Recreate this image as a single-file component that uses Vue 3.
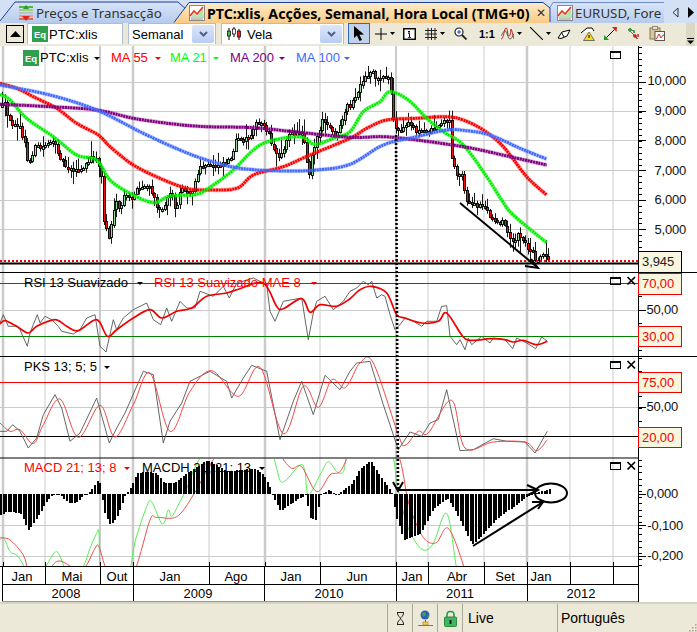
<script setup>
const rnd = (() => { let s = 12345; return () => (s = (s * 16807) % 2147483647) / 2147483647 })()
const tr = (a, ox, oy) => a.map(([x, y]) => [ox + x / 3, oy + y / 3])
const polyl = p => p.map(q => q[0].toFixed(1) + ',' + q[1].toFixed(1)).join(' ')
const smooth = p => {
  let d = `M${p[0][0].toFixed(1)} ${p[0][1].toFixed(1)}`
  for (let i = 0; i < p.length - 1; i++) {
    const a = p[Math.max(i - 1, 0)], b = p[i], c = p[i + 1], e = p[Math.min(i + 2, p.length - 1)]
    d += `C${(b[0] + (c[0] - a[0]) / 6).toFixed(1)} ${(b[1] + (c[1] - a[1]) / 6).toFixed(1)} ${(c[0] - (e[0] - b[0]) / 6).toFixed(1)} ${(c[1] - (e[1] - b[1]) / 6).toFixed(1)} ${c[0].toFixed(1)} ${c[1].toFixed(1)}`
  }
  return d
}
const interp = (p, x) => {
  if (x <= p[0][0]) return p[0][1]
  for (let i = 0; i < p.length - 1; i++) {
    if (x <= p[i + 1][0]) {
      const w = p[i + 1][0] - p[i][0]
      return w <= 0 ? p[i + 1][1] : p[i][1] + (p[i + 1][1] - p[i][1]) * (x - p[i][0]) / w
    }
  }
  return p[p.length - 1][1]
}
const join = (a, b, o1, o2, oy) => [...tr(a, o1, oy), ...tr(b, o2, oy)]

const price = join(
  [[3,140],[10,130],[20,175],[30,190],[42,185],[55,200],[72,250],[82,320],[92,285],[105,255],[115,265],[130,255],[145,240],[165,260],[180,295],[195,320],[215,325],[232,335],[245,325],[260,310],[275,285],[290,305],[300,340],[303,470],[315,500],[325,540],[332,480],[345,430],[355,450],[370,405],[390,415],[405,390],[435,375],[450,390],[465,430],[485,450],[500,400],[515,400],[520,450],[535,410],[540,380],[575,395],[585,350],[600,320],[630,315],[640,320],[660,310],[680,300],[695,280],[705,240],[725,240],[745,230],[760,195],[785,190],[800,215],[820,270],[830,295],[850,260],[860,225],[905,215],[915,265],[922,370],[930,290],[945,240],[965,180],[985,205],[1000,225],[1010,220],[1025,180],[1040,135]],
  [[0,135],[10,115],[30,75],[45,50],[65,30],[78,60],[95,50],[115,50],[120,100],[123,165],[135,210],[150,210],[175,185],[195,210],[220,215],[235,210],[270,190],[295,175],[295,270],[305,310],[320,345],[335,345],[342,400],[350,430],[375,435],[400,435],[415,470],[430,480],[460,490],[470,520],[490,545],[500,525],[520,550],[545,575],[555,600],[565,595],[575,575],[590,590],[596,600]],
  0, 350, 60)
const candles = []
for (let x = 1, prev = interp(price, 0); x < 549; x += 2.54) {
  const c = interp(price, x), n = (rnd() - 0.5) * 5
  const open = prev, close = c + n
  const top = Math.min(open, close), bot = Math.max(open, close)
  candles.push({
    x: Math.round(x) + 0.5,
    y: Math.round(top) + 0.5,
    h: Math.max(2, Math.round(bot - top)),
    up: close < open,
    t: top - 1 - rnd() * rnd() * 15,
    b: Math.min(bot + 1 + rnd() * rnd() * 15, 262)
  })
  prev = close
}
const ma55 = smooth(join(
  [[0,70],[50,85],[100,110],[170,145],[230,190],[295,225],[330,260],[400,315],[480,355],[560,385],[620,390],[710,385],[760,345],[850,320],[930,285],[1050,235]],
  [[50,205],[110,180],[200,175],[290,170],[340,180],[400,210],[460,260],[530,350],[590,405]], 0, 350, 60))
const ma21 = smooth(join(
  [[0,103],[30,120],[80,175],[160,230],[230,285],[290,300],[330,360],[390,400],[460,428],[510,408],[590,403],[640,375],[700,330],[760,270],[810,243],[900,230],[945,253],[1000,235],[1050,215]],
  [[40,155],[90,125],[120,95],[175,120],[230,175],[280,215],[340,255],[410,350],[455,420],[490,465],[590,548]], 0, 350, 60))
const ma200 = smooth(join(
  [[0,133],[150,140],[290,150],[400,175],[520,192],[620,200],[760,203],[880,215],[1050,232]],
  [[100,230],[200,240],[350,262],[480,290],[590,315]], 0, 350, 60))
const ma100 = smooth(join(
  [[0,75],[150,105],[290,150],[430,220],[540,270],[620,300],[720,325],[850,333],[950,330],[1050,313]],
  [[100,255],[200,230],[290,210],[350,212],[420,225],[510,265],[590,297]], 0, 350, 60))
const maLines = [[ma55, '#ff0000'], [ma21, '#00f000'], [ma200, '#800080'], [ma100, '#4169ff']]

const rsiGrey = polyl(join(
  [[0,165],[10,140],[25,175],[50,175],[60,185],[82,235],[90,195],[100,170],[112,140],[120,165],[135,145],[155,155],[175,175],[185,190],[220,198],[240,185],[260,150],[285,140],[300,235],[318,252],[340,155],[350,185],[370,150],[400,125],[440,105],[460,155],[482,170],[500,120],[515,160],[540,100],[560,120],[585,120],[600,70],[640,85],[670,55],[688,90],[710,45],[760,30],[800,50],[810,130],[825,160],[850,100],[905,90],[925,215],[940,135],[950,100],[975,85],[1000,125],[1030,100],[1050,70]],
  [[20,60],[40,40],[55,50],[65,40],[80,90],[95,80],[105,85],[120,140],[135,185],[150,170],[165,150],[190,160],[215,175],[230,160],[260,160],[275,115],[290,113],[300,205],[320,230],[330,215],[345,245],[355,210],[365,230],[395,205],[420,225],[430,210],[465,215],[488,242],[500,210],[530,225],[557,242],[575,207],[592,220]], 0, 350, 268))
const rsiRed = smooth(join(
  [[0,168],[15,158],[50,175],[85,195],[110,175],[165,155],[200,175],[235,188],[290,155],[322,205],[350,185],[400,150],[450,125],[485,150],[530,130],[575,120],[620,85],[680,75],[720,62],[790,45],[830,115],[850,122],[905,92],[930,133],[960,110],[1010,115],[1050,92]],
  [[30,65],[65,55],[110,75],[140,140],[165,150],[215,165],[265,160],[290,135],[340,207],[370,217],[420,212],[465,215],[490,222],[520,217],[560,230],[592,220]], 0, 350, 268))
const pksGrey = polyl(join(
  [[0,490],[20,490],[38,470],[60,490],[85,540],[110,510],[130,440],[165,380],[185,420],[210,520],[240,495],[290,390],[328,525],[350,480],[375,435],[430,310],[460,320],[490,525],[510,460],[545,405],[570,340],[630,310],[680,340],[695,390],[730,330],[755,292],[800,310],[840,515],[880,400],[905,340],[940,440],[975,322],[1020,365],[1050,310]],
  [[20,285],[60,280],[100,410],[145,545],[180,492],[215,505],[240,465],[265,455],[290,365],[330,548],[370,545],[430,512],[470,520],[525,522],[555,555],[592,490]], 0, 350, 268))
const pksRed = smooth(join(
  [[0,465],[30,490],[60,485],[100,527],[130,470],[180,393],[235,508],[300,412],[345,507],[400,410],[450,315],[510,490],[570,370],[635,308],[715,385],[780,298],[850,497],[910,355],[955,418],[995,335],[1030,360],[1050,340]],
  [[30,285],[70,285],[145,500],[165,532],[205,490],[235,495],[305,397],[345,540],[430,522],[525,522],[560,548],[592,515]], 0, 350, 268))

const hist = join(
  [[0,180],[20,170],[60,175],[85,228],[120,170],[140,135],[160,118],[180,120],[205,145],[225,145],[250,120],[265,115],[290,78],[298,85],[302,118],[310,170],[330,212],[350,185],[375,120],[385,105],[410,55],[430,50],[470,55],[490,85],[520,85],[560,55],[620,15],[680,50],[760,40],[790,60],[810,100],[815,118],[840,170],[880,140],[915,120],[930,190],[945,195],[960,120],[985,105],[1010,122],[1040,95]],
  [[0,90],[30,40],[60,18],[100,80],[115,100],[125,118],[135,180],[160,255],[210,235],[250,160],[290,130],[310,160],[365,270],[400,235],[440,190],[490,155],[530,125],[550,115],[570,110],[595,103]], 0, 350, 455)
const bars = []
for (let x = 0; x < 549; x += 2.54) {
  const y = interp(hist, x)
  bars.push({ x: Math.round(x), y: Math.round(Math.min(y, 494)), h: Math.max(1, Math.round(Math.abs(y - 494))) })
}
const macdGreen = smooth(join(
  [[0,255],[12,250],[30,290],[50,300],[70,330],[85,370],[110,380],[140,330],[170,290],[195,340],[220,380],[250,335],[270,280],[290,235],[297,235],[303,360],[340,400],[388,345],[405,260],[440,155],[455,140],[487,207],[505,165],[515,185],[535,150],[560,100],[600,10],[700,-120],[800,-60],[820,0],[830,40],[848,82],[900,30],[915,50],[925,120],[960,60],[985,20],[1010,50],[1030,50],[1040,0],[1060,-60]],
  [[60,-60],[125,0],[140,80],[165,190],[190,250],[220,285],[250,265],[290,175],[318,330],[335,420]], 0, 350, 455))
const macdRed = smooth(join(
  [[0,248],[30,255],[70,300],[85,345],[115,380],[150,340],[180,318],[245,345],[285,280],[297,275],[320,345],[360,400],[405,345],[450,195],[470,187],[530,185],[580,120],[650,0],[750,-100],[830,-40],[845,5],[875,40],[905,35],[950,110],[990,60],[1020,50],[1045,0],[1070,-60]],
  [[90,-60],[145,0],[175,140],[205,220],[230,258],[260,262],[295,220],[340,330],[360,420]], 0, 350, 455))

const vgrid = [[3,2.5],[45,1],[100,2],[133,2.5],[209,1],[265,2.5],[320,1],[396,2],[428,1],[484,1],[527,2.5],[570,1],[613,1]]
const hgrid = [82,111,140,170,200,229,310,407,525,556]
const mainLabels = [['10,000',80],['9,000',110],['8,000',140],['7,000',170],['6,000',199],['5,000',229]]
const otherLabels = [['50,00',309,678],['50,00',406,678],['0,000',493,678],['-0,100',525,683],['-0,200',555,683]]
const ticks = []
for (let y = 47; y < 252; y += 5.88) ticks.push([Math.round(y) + 0.5, 3])
hgrid.slice(0, 6).forEach(y => ticks.push([y + 0.5, 7]))
for (let y = 296; y < 356; y += 13.5) ticks.push([Math.round(y) + 0.5, 3])
for (let y = 358; y < 456; y += 12.5) ticks.push([Math.round(y) + 0.5, 3])
for (let y = 460; y < 566; y += 6.2) ticks.push([Math.round(y) + 0.5, 3])
;[310, 407, 494, 525, 556].forEach(y => ticks.push([y + 0.5, 7]))
const boxes = [
  { t: '3,945', y: 251, h: 21, dark: true },
  { t: '70,00', y: 273, h: 21 },
  { t: '30,00', y: 326, h: 20 },
  { t: '75,00', y: 372, h: 20 },
  { t: '20,00', y: 427, h: 20 }
]
const panelBtns = [[51, false], [277, true], [361, true], [462, true]]
const topLegend = [
  { t: 'MA 55', x: 111, c: '#ff0000', k: 158 },
  { t: 'MA 21', x: 170, c: '#00ff00', k: 216 },
  { t: 'MA 200', x: 230, c: '#800080', k: 282 },
  { t: 'MA 100', x: 296, c: '#4169ff', k: 347 }
]
const months = [['Jan',22],['Mai',72],['Out',117],['Jan',170],['Ago',236],['Jan',291],['Jun',357],['Jan',412],['Abr',457],['Set',505],['Jan',541]]
const msep = [2,45,100,133,209,264,320,396,428,484,527,570,613,638]
const years = [['2008',66],['2009',198],['2010',329],['2011',460],['2012',581]]
const ysep = [2,133,264,396,527,638]
const caret = (x, y) => `${x - 3},${y} ${x + 3},${y} ${x},${y + 3}`
</script>

<template>
  <div class="app">
    <div class="tabs">
      <svg class="tabs-bg" width="697" height="23" viewBox="0 0 697 23">
        <defs>
          <linearGradient id="tb" x1="0" y1="0" x2="0" y2="1"><stop offset="0" stop-color="#d6e3f7" /><stop offset="1" stop-color="#b6cbec" /></linearGradient>
          <linearGradient id="to" x1="0" y1="0" x2="0" y2="1"><stop offset="0" stop-color="#fdebc9" /><stop offset="1" stop-color="#f9cb85" /></linearGradient>
        </defs>
        <polygon points="0,23 14,3 178,3 190,14 190,23" fill="url(#tb)" />
        <polyline points="0,21 15,2 178,2 187,10" fill="none" stroke="#1c3f94" />
        <polygon points="550,23 553,4 664,4 664,23" fill="url(#tb)" />
        <polyline points="549,9 553,2.5 664,2.5" fill="none" stroke="#6f8fc8" />
        <polygon points="174,23 189,3 543,3 550,8 550,23" fill="url(#to)" />
        <polyline points="174,22.5 189,2.5 543,2.5 550,8 550,22" fill="none" stroke="#1c3f94" />
      </svg>
      <div class="tab first">
        <svg class="tab-ico" width="16" height="16" viewBox="0 0 16 16">
          <rect x="1" y="1" width="14" height="2" fill="#4fbb3c" /><rect x="1" y="4" width="14" height="2" fill="#8fd67f" /><rect x="1" y="7" width="14" height="1.5" fill="#bbb" />
          <rect x="1" y="10" width="14" height="2" fill="#f29a8f" /><rect x="1" y="13" width="14" height="2" fill="#dd6a5c" />
          <polygon points="8,0 11,4 5,4" fill="#2f9a2a" /><polygon points="8,16 12,11 4,11" fill="#e2231a" />
        </svg>
        <span>Preços e Transacção</span>
      </div>
      <div class="tab active">
        <svg class="tab-ico" width="16" height="16" viewBox="0 0 16 16">
          <rect x=".5" y=".5" width="15" height="15" fill="#fff" stroke="#888" />
          <path d="M1 13 L5 8 L8 11 L14 3 L15 13 Z" fill="#b9e2b1" /><path d="M1 11 L5 6 L8 9 L14 2" fill="none" stroke="#e8341f" stroke-width="1.6" />
          <rect x="2" y="13.5" width="12" height="1" fill="#8a8a8a" />
        </svg>
        <b>PTC:xlis, Acções, Semanal, Hora Local (TMG+0)</b>
        <span class="tab-x">✕</span>
      </div>
      <div class="tab third">
        <svg class="tab-ico" width="16" height="16" viewBox="0 0 16 16">
          <rect x=".5" y=".5" width="15" height="15" fill="#fff" stroke="#888" />
          <path d="M1 13 L5 8 L8 11 L14 3 L15 13 Z" fill="#b9e2b1" /><path d="M1 11 L5 6 L8 9 L14 2" fill="none" stroke="#e8341f" stroke-width="1.6" />
          <rect x="2" y="13.5" width="12" height="1" fill="#8a8a8a" />
        </svg>
        <span>EURUSD, Fore</span>
      </div>
      <div class="tab-nav">
        <svg width="7" height="11" viewBox="0 0 7 11"><polygon points="6,1 1,5.5 6,10" fill="none" stroke="#333" /></svg>
        <svg width="7" height="11" viewBox="0 0 7 11"><polygon points="1,0 7,5.5 1,11" fill="#000" /></svg>
      </div>
    </div>

    <div class="toolbar">
      <div class="collapse"><svg width="11" height="6" viewBox="0 0 11 6"><polygon points="5.5,0 11,6 0,6" fill="#000" /></svg></div>
      <div class="combo sym">
        <svg width="16" height="16" viewBox="0 0 16 16"><rect width="16" height="16" fill="#2f9e4f" /><text x="2" y="12" class="eq">Eq</text></svg>
        <span>PTC:xlis</span>
      </div>
      <div class="combo per"><span>Semanal</span><i class="drop"><svg width="9" height="6" viewBox="0 0 9 6"><path d="M1 1 L4.5 4.5 L8 1" fill="none" stroke="#4d6185" stroke-width="2" /></svg></i></div>
      <div class="combo kind">
        <svg width="16" height="14" viewBox="0 0 16 14"><path d="M3 1V13M8 0V10M13 2V13" stroke="#000" /><rect x="1.5" y="4" width="3" height="5" fill="#3ec13e" stroke="#000" stroke-width=".7" /><rect x="6.5" y="2" width="3" height="5" fill="#fff" stroke="#000" stroke-width=".7" /><rect x="11.5" y="4" width="3" height="6" fill="#e22" stroke="#000" stroke-width=".7" /></svg>
        <span>Vela</span><i class="drop"><svg width="9" height="6" viewBox="0 0 9 6"><path d="M1 1 L4.5 4.5 L8 1" fill="none" stroke="#4d6185" stroke-width="2" /></svg></i>
      </div>
      <div class="tools">
        <div class="tool sel"><svg width="12" height="16" viewBox="0 0 12 16"><path d="M1 0 L1 12 L4 9.5 L6.5 15 L9 14 L6.5 8.8 L11 8.5 Z" fill="#000" /></svg></div>
        <svg class="t-plus" width="12" height="12" viewBox="0 0 12 12"><path d="M6 0V12M0 6H12" stroke="#000" /></svg>
        <svg class="car" width="5" height="3" viewBox="0 0 5 3"><polygon points="0,0 5,0 2.5,3" /></svg>
        <svg class="t-info" width="13" height="12" viewBox="0 0 13 12"><rect x=".75" y=".75" width="11.5" height="10.5" fill="#fff" stroke="#000" stroke-width="1.4" /><path d="M5 3h2v1.4h-2zM5 5.2h2V9h1v.8H5V9h1V6h-1z" fill="#000" /></svg>
        <svg class="t-grid" width="12" height="12" viewBox="0 0 12 12"><path d="M3 0V12M6.5 0V12M10 0V12M0 2.5H12M0 6H12M0 9.5H12" stroke="#222" fill="none" /></svg>
        <svg class="car" width="5" height="3" viewBox="0 0 5 3"><polygon points="0,0 5,0 2.5,3" /></svg>
        <svg class="t-mag" width="13" height="13" viewBox="0 0 13 13"><circle cx="5" cy="5" r="4" fill="#fff" stroke="#222" stroke-width="1.2" /><path d="M3 5H7M5 3V7" stroke="#2040d0" /><path d="M8 8L12.5 12.5" stroke="#222" stroke-width="1.8" /></svg>
        <span class="t-one">1:1</span>
        <svg class="t-curve" width="13" height="13" viewBox="0 0 13 13"><path d="M0 12C3 12 3 1 5 1S6 9 8 9 9.5 2 10 2 12 8 13 12" fill="none" stroke="#c02020" /><path d="M0 9C2 6 3 3 4.5 4S7 12 9 12 11 9 13 7" fill="none" stroke="#333" stroke-width=".7" /></svg>
        <svg class="car" width="5" height="3" viewBox="0 0 5 3"><polygon points="0,0 5,0 2.5,3" /></svg>
        <svg class="t-line" width="13" height="13" viewBox="0 0 13 13"><path d="M0 0L13 13" stroke="#000" stroke-width="1.1" /></svg>
        <svg class="car" width="5" height="3" viewBox="0 0 5 3"><polygon points="0,0 5,0 2.5,3" /></svg>
        <svg class="t-eraser" width="14" height="10" viewBox="0 0 14 10"><path d="M1 9L5 3L13 1L10 7L4 9.5Z" fill="#fff" stroke="#000" /><path d="M4.5 3.5L7 8" stroke="#000" /></svg>
        <svg class="t-warn" width="15" height="14" viewBox="0 0 15 14"><path d="M1 6L7 1H12L14 4" fill="#fff" stroke="#000" /><polygon points="9,5 14.5,13.5 3.5,13.5" fill="#f5d820" stroke="#555" stroke-width=".8" /><path d="M9 8V11" stroke="#000" /></svg>
        <svg class="t-arrow" width="13" height="13" viewBox="0 0 13 13"><path d="M2.5 10.5L10.5 2.5" stroke="#000" /><polygon points="8,0 13,0 12.5,5" fill="#e02020" /><polygon points="0,8 5,13 0,13" fill="#20a020" /></svg>
        <svg class="t-spark" width="13" height="13" viewBox="0 0 13 13"><path d="M1 2L11 12M3 1L8 6M6 8L10 12" stroke="#444" stroke-width=".8" /><path d="M3 1V5M1 3H5M7 3V6" stroke="#20a030" stroke-width="1.5" /><path d="M8 7V11M6 9H10M11 7V10" stroke="#e02020" stroke-width="1.5" /></svg>
        <svg class="t-clip" width="16" height="15" viewBox="0 0 16 15"><rect x="1" y="2" width="10" height="11" fill="#d8c79a" stroke="#8a7a50" /><rect x="3.5" y="0.5" width="5" height="3" fill="#e6e0c8" stroke="#888" /><rect x="6" y="5.5" width="9.5" height="9" fill="#fff" stroke="#555" /><path d="M7 13C8.5 13 9 8 10 8S11 12 12 12 13 8.5 15 9" fill="none" stroke="#c02020" /></svg>
      </div>
      <div class="more"><svg width="7" height="6" viewBox="0 0 7 6"><path d="M0 .5H7" stroke="#000" /><polygon points="0,2.5 7,2.5 3.5,6" fill="#000" /></svg></div>
    </div>

    <svg class="chart" width="697" height="556" viewBox="0 46 697 556">
      <defs>
        <clipPath id="mc"><rect x="0" y="459" width="638" height="107" /></clipPath>
        <clipPath id="pc"><rect x="0" y="357" width="638" height="100" /></clipPath>
      </defs>
      <rect x="0" y="46" width="697" height="556" fill="#fff" />
      <g stroke="#cbcbcb">
        <path v-for="v in vgrid" :key="v[0]" :d="`M${v[0]} 46V566`" :stroke-width="v[1]" />
        <path v-for="y in hgrid" :key="y" :d="`M0 ${y + 0.5}H638`" />
      </g>

      <g stroke="#000">
        <g v-for="(c, i) in candles" :key="i">
          <path :d="`M${c.x + 1} ${c.t.toFixed(1)}V${c.b.toFixed(1)}`" stroke-width=".9" />
          <rect :x="c.x" :y="c.y" width="2" :height="c.h" :fill="c.up ? '#9adf9a' : '#ee1111'" stroke-width=".9" />
        </g>
      </g>
      <g fill="none" stroke-linejoin="round">
        <g v-for="m in maLines" :key="m[1]">
          <path :d="m[0]" :stroke="m[1]" stroke-width="4.6" opacity=".22" />
          <path :d="m[0]" :stroke="m[1]" stroke-width="3" stroke-dasharray="2.2 .5" />
        </g>
      </g>
      <path d="M0 261H638" stroke="#f00000" stroke-width="2" stroke-dasharray="2 2" />
      <path d="M0 263.5H638" stroke="#000" stroke-width="2" />

      <g class="lbl">
        <rect x="23" y="50" width="16" height="16" fill="#2f9e4f" /><text x="25" y="62" class="eq">Eq</text>
        <text x="40" y="62">PTC:xlis</text><polygon :points="caret(97, 57)" fill="#000" />
        <g v-for="l in topLegend" :key="l.t">
          <text :x="l.x" y="62" :fill="l.c">{{ l.t }}</text><polygon :points="caret(l.k, 57)" :fill="l.c" />
        </g>
      </g>

      <!-- RSI -->
      <path d="M0 283.5H638" stroke="#f00000" />
      <path d="M0 336.5H638" stroke="#008000" />
      <polyline :points="rsiGrey" fill="none" stroke="#555" stroke-width=".9" />
      <path :d="rsiRed" fill="none" stroke="#f00000" stroke-width="1.7" />
      <g class="lbl">
        <text x="24" y="287">RSI 13 Suavizado</text><polygon :points="caret(140, 282)" fill="#000" />
        <text x="154" y="287" fill="#ff0000">RSI 13 Suavizado MAE 8</text><polygon :points="caret(314, 282)" fill="#f00000" />
      </g>

      <!-- PKS -->
      <path d="M0 382.5H638" stroke="#f00000" />
      <path d="M0 436.5H638" stroke="#000" />
      <g clip-path="url(#pc)">
        <polyline :points="pksGrey" fill="none" stroke="#555" stroke-width=".9" />
        <path :d="pksRed" fill="none" stroke="#f04848" stroke-width="1" />
      </g>
      <g class="lbl">
        <text x="24" y="371">PKS 13; 5; 5</text><polygon :points="caret(107, 366)" fill="#000" />
      </g>

      <!-- MACD -->
      <g clip-path="url(#mc)" fill="none">
        <path :d="macdGreen" stroke="#55ee55" stroke-width="1" />
        <path :d="macdRed" stroke="#f05050" stroke-width="1" />
      </g>
      <g fill="#000"><rect v-for="(b, i) in bars" :key="i" :x="b.x" :y="b.y" width="2" :height="b.h" /></g>
      <g class="lbl">
        <text x="24" y="472" fill="#ff0000">MACD 21; 13; 8</text><polygon :points="caret(127, 467)" fill="#f00000" />
        <text x="142" y="472">MACDH 21; 21; 13</text><polygon :points="caret(262, 467)" fill="#000" />
      </g>

      <!-- Drawn annotations -->
      <path d="M396 135L398 490" stroke="#000" stroke-width="2.6" stroke-dasharray="2 2" fill="none" />
      <path d="M396 458L398 490" stroke="#fff" stroke-width=".8" stroke-dasharray="1 3" fill="none" />
      <g fill="none" stroke="#000" stroke-width="2">
        <path d="M460 203L537 267" />
        <path d="M525 266L538 268L531 259" />
        <path d="M398 490L537 490" />
        <path d="M527 485L538 490L528 495" />
        <path d="M393 482L398 491L403 482" />
        <path d="M473 546L543 502" />
        <path d="M532 502L543 502L538 509" />
        <ellipse cx="551" cy="493" rx="16" ry="9.5" />
      </g>

      <!-- Panel frames -->
      <g stroke="#000" stroke-width="1">
        <path d="M0 272.5H697M0 356.5H697" />
        <path d="M0 458H638" stroke-width="1.2" />
        <path d="M0 566.5H638" />
        <path d="M638.5 46V602" />
        <path v-for="(t, i) in ticks" :key="i" :d="`M639 ${t[0]}H${639 + t[1]}`" />
      </g>

      <g class="lbl axis">
        <text v-for="l in mainLabels" :key="l[0]" x="686" :y="l[1] + 5">{{ l[0] }}</text>
        <text v-for="l in otherLabels" :key="l[0] + l[1]" :x="l[2]" :y="l[1] + 5">{{ l[0] }}</text>
      </g>
      <g v-for="b in boxes" :key="b.t">
        <rect x="638.5" :y="b.y + 0.5" width="43" :height="b.h" fill="#f8f6de" :stroke="b.dark ? '#000' : '#f00000'" />
        <text class="boxlbl" x="642" :y="b.y + 15" :fill="b.dark ? '#222' : '#f00000'">{{ b.t }}</text>
      </g>
      <g v-for="p in panelBtns" :key="p[0]">
        <rect x="610.5" :y="p[0] + 0.5" width="10" height="7" fill="none" stroke="#000" />
        <path :d="`M610 ${p[0] + 1.5}H621`" stroke="#000" />
        <path v-if="p[1]" :d="`M627.5 ${p[0]}L635 ${p[0] + 7.5}M635 ${p[0]}L627.5 ${p[0] + 7.5}`" stroke="#000" stroke-width="1.7" />
      </g>

      <!-- Time axis -->
      <g stroke="#000">
        <path v-for="x in msep" :key="'m' + x" :d="`M${x + 0.5} 566V584`" />
        <path v-for="x in ysep" :key="'y' + x" :d="`M${x + 0.5} 584V602`" />
        <path d="M2 584.5H638" />
        <path d="M2 601.5H638" stroke="#999" />
        <path v-for="x in [3,45,100,133,209,265,320,396,428,484,527,570,613]" :key="'k' + x" :d="`M${x + 0.5} 562V566`" />
      </g>
      <g class="lbl mid">
        <text v-for="m in months" :key="m[0] + m[1]" :x="m[1]" y="581">{{ m[0] }}</text>
        <text v-for="y in years" :key="y[0]" :x="y[1]" y="598">{{ y[0] }}</text>
      </g>
    </svg>

    <div class="status">
      <div class="spacer"></div>
      <div class="cell ic">
        <svg width="9" height="13" viewBox="0 0 9 13"><path d="M1 .5H8M1 12.5H8M1.5 1C1.5 4 4 5 4.5 6.5 4 8 1.5 9 1.5 12M7.5 1C7.5 4 5 5 4.5 6.5 5 8 7.5 9 7.5 12" fill="none" stroke="#222" /></svg>
      </div>
      <div class="cell ic">
        <svg width="15" height="17" viewBox="0 0 15 17"><circle cx="7" cy="5" r="4.5" fill="#2e5fb5" /><path d="M4 3L7 2L8 5L5 7ZM9 6L11 5V8Z" fill="#3aa655" /><path d="M7.5 10V13" stroke="#666" /><rect x="5" y="12" width="5" height="3" fill="#f2cc55" stroke="#a08020" stroke-width=".6" /><path d="M0 15.5H15" stroke="#777" /></svg>
      </div>
      <div class="cell ic">
        <svg width="13" height="17" viewBox="0 0 13 17"><path d="M3 7V4.5C3 .5 10 .5 10 4.5V7" fill="none" stroke="#2a9a48" stroke-width="1.6" /><rect x="0.5" y="7" width="12" height="9.5" rx="1" fill="#45b45f" stroke="#2a8a40" /><rect x="5.5" y="10" width="2" height="4" fill="#123" /></svg>
      </div>
      <div class="cell live">Live</div>
      <div class="cell lang">Português</div>
      <svg class="grip" width="9" height="9" viewBox="0 0 9 9"><path d="M7 1h1.5v1.5H7zM4 4h1.5v1.5H4zM7 4h1.5v1.5H7zM1 7h1.5v1.5H1zM4 7h1.5v1.5H4zM7 7h1.5v1.5H7z" fill="#aaa494" /></svg>
    </div>
  </div>
</template>

<style scoped>
.app { width: 697px; height: 632px; overflow: hidden; background: #fff; display: flex; flex-direction: column; font-family: "Liberation Sans", Arial, sans-serif; color: #000; }
.tabs { position: relative; height: 23px; flex: none; background: #d3e0f6; display: flex; align-items: center; }
.tabs-bg { position: absolute; left: 0; top: 0; }
.tab { position: relative; display: flex; align-items: center; height: 23px; font-family: "Noto Sans", sans-serif; font-size: 13.3px; white-space: nowrap; overflow: hidden; padding-top: 3px; box-sizing: border-box; flex: none; }
.tab-ico { flex: none; margin-right: 2px; }
.tab.first { width: 189px; padding-left: 18px; color: #333; }
.tab.active { width: 361px; }
.tab.active b { font-weight: 700; font-size: 14.2px; }
.tab-x { position: absolute; left: 347px; top: 4px; font-size: 12px; color: #333; }
.tab.third { width: 114px; padding-left: 7px; color: #333; }
.tab-nav { position: relative; display: flex; gap: 8px; margin-left: 8px; align-items: center; padding-top: 2px; }
.toolbar { height: 23px; flex: none; background: #ece9d8; display: flex; align-items: flex-start; position: relative; }
.collapse { width: 16px; height: 16px; border: 1px solid #000; margin: 2px 0 0 6px; display: flex; align-items: center; justify-content: center; flex: none; background: #ece9d8; }
.combo { height: 21px; box-sizing: border-box; background: #fff; border: 1px solid #aebcd6; border-bottom: none; display: flex; align-items: center; font-size: 13px; flex: none; }
.sym { width: 96px; margin-left: 3px; padding-left: 4px; gap: 1px; }
.per { width: 88px; margin-left: 5px; padding-left: 3px; justify-content: space-between; }
.kind { width: 123px; margin-left: 5px; padding-left: 4px; gap: 2px; }
.kind span { margin-left: 3px; }
.kind .drop { margin-left: auto; }
.drop { width: 22px; height: 18px; margin-right: 1px; background: linear-gradient(#dde7fa, #b9cdf3); display: flex; align-items: center; justify-content: center; border-radius: 2px; }
.tools { display: flex; align-items: center; height: 21px; margin-left: 4px; }
.tool.sel { width: 22px; height: 21px; box-sizing: border-box; background: #c1d2ee; border: 1px solid #316ac5; display: flex; align-items: center; justify-content: center; }
.car { margin-left: 3px; fill: #000; }
.t-plus { margin-left: 5px; }
.t-info { margin-left: 8px; }
.t-grid { margin-left: 9px; }
.t-mag { margin-left: 9px; }
.t-one { margin-left: 12px; font-size: 11px; font-weight: 700; width: 16px; }
.t-curve { margin-left: 6px; }
.t-line { margin-left: 8px; }
.t-eraser { margin-left: 6px; }
.t-warn { margin-left: 9px; }
.t-arrow { margin-left: 9px; }
.t-spark { margin-left: 10px; }
.t-clip { margin-left: 9px; }
.more { position: absolute; left: 686px; top: 0; width: 9px; height: 23px; background: #dcd8c4; display: flex; align-items: flex-end; justify-content: center; padding-bottom: 2px; box-sizing: border-box; }
.chart { display: block; flex: none; }
.lbl text { font-family: "Liberation Sans", Arial, sans-serif; font-size: 13px; }
.axis text { text-anchor: end; letter-spacing: -.2px; fill: #111; }
.mid text { text-anchor: middle; }
.boxlbl { font-family: "Liberation Sans", Arial, sans-serif; font-size: 13px; letter-spacing: -.1px; }
.lbl text.eq, .eq { font-family: "Liberation Sans", Arial, sans-serif; font-size: 9.5px; font-weight: 700; fill: #fff; }
.status { height: 30px; flex: none; background: #ece9d8; border-top: 2px solid #d8d4c0; box-sizing: border-box; display: flex; align-items: stretch; font-size: 14px; position: relative; }
.spacer { width: 387px; flex: none; }
.cell { border-left: 1px solid #aca899; display: flex; align-items: center; box-sizing: border-box; flex: none; }
.ic { width: 25px; justify-content: center; }
.live { width: 95px; padding-left: 5px; }
.lang { width: 100px; padding-left: 3px; }
.grip { position: absolute; right: 0; bottom: 0; }
</style>
